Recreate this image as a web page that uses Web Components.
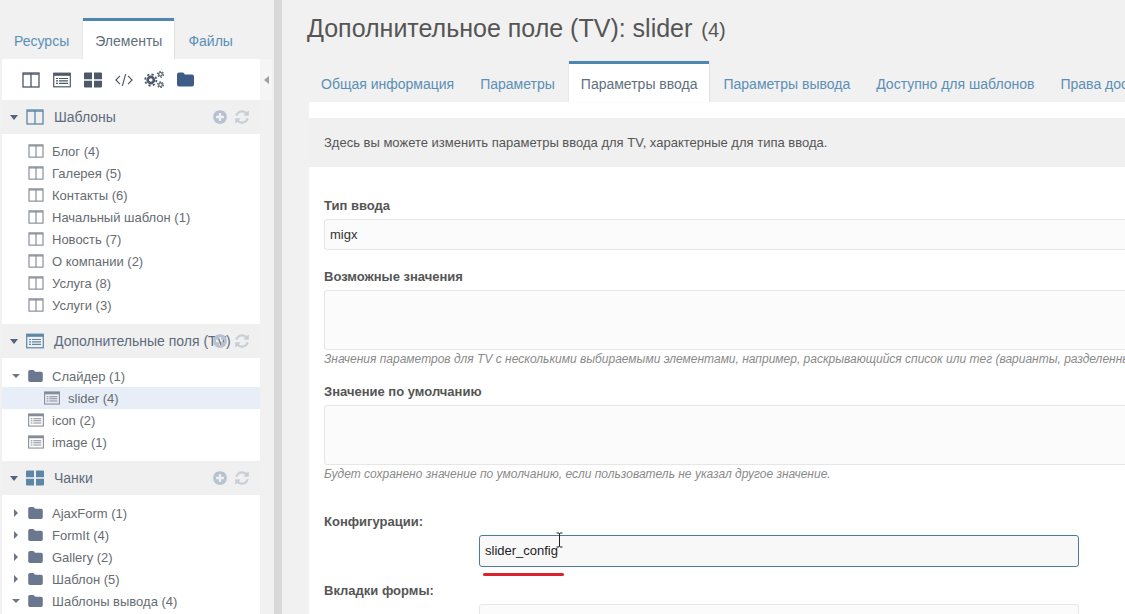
<!DOCTYPE html>
<html lang="ru">
<head>
<meta charset="utf-8">
<title>slider</title>
<style>
    html, body { margin: 0; height: 100%; overflow: hidden; background: #f1f1f1; }
    body { font-family: "Liberation Sans", Arial, sans-serif; }
</style>
</head>
<body>
<mx-app>
    <mx-sidebar slot="side">
        <mx-tree-section icon="template" title="Шаблоны">
            <mx-tree-row icon="template">Блог (4)</mx-tree-row>
            <mx-tree-row icon="template">Галерея (5)</mx-tree-row>
            <mx-tree-row icon="template">Контакты (6)</mx-tree-row>
            <mx-tree-row icon="template">Начальный шаблон (1)</mx-tree-row>
            <mx-tree-row icon="template">Новость (7)</mx-tree-row>
            <mx-tree-row icon="template">О компании (2)</mx-tree-row>
            <mx-tree-row icon="template">Услуга (8)</mx-tree-row>
            <mx-tree-row icon="template">Услуги (3)</mx-tree-row>
        </mx-tree-section>
        <mx-tree-section icon="tv" title="Дополнительные поля (TV)" style="--list-top: 7px">
            <mx-tree-row icon="folder" arrow="down">Слайдер (1)</mx-tree-row>
            <mx-tree-row icon="tv" level="1" selected>slider (4)</mx-tree-row>
            <mx-tree-row icon="tv">icon (2)</mx-tree-row>
            <mx-tree-row icon="tv">image (1)</mx-tree-row>
        </mx-tree-section>
        <mx-tree-section icon="chunk" title="Чанки" style="--list-top: 7px">
            <mx-tree-row icon="folder" arrow="right">AjaxForm (1)</mx-tree-row>
            <mx-tree-row icon="folder" arrow="right">FormIt (4)</mx-tree-row>
            <mx-tree-row icon="folder" arrow="right">Gallery (2)</mx-tree-row>
            <mx-tree-row icon="folder" arrow="right">Шаблон (5)</mx-tree-row>
            <mx-tree-row icon="folder" arrow="down">Шаблоны вывода (4)</mx-tree-row>
        </mx-tree-section>
    </mx-sidebar>
    <mx-main slot="main"></mx-main>
</mx-app>

<script>
'use strict';

const ICONS = {
    template: '<svg viewBox="0 0 18 16"><rect x="1" y="1" width="16" height="14" fill="none" stroke="currentColor" stroke-width="1.3"/><path d="M9 1v14M1 2.200h16" fill="none" stroke="currentColor" stroke-width="1.3"/></svg>',
    tv: '<svg viewBox="0 0 18 15"><rect x=".7" y=".7" width="16.6" height="13.6" fill="none" stroke="currentColor" stroke-width="1.2"/><rect x=".7" y=".7" width="16.6" height="2.6" fill="currentColor"/><path d="M3 6h2M6 6h9M3 8.400h2M6 8.400h9M3 10.800h2M6 10.800h9" fill="none" stroke="currentColor" stroke-width="1.2"/></svg>',
    chunk: '<svg viewBox="0 0 18 15"><path d="M0 1a1 1 0 0 1 1-1h7v6.800H0zM10 0h7a1 1 0 0 1 1 1v5.800h-8zM0 8.200h8V15H1a1 1 0 0 1-1-1zM10 8.200h8V14a1 1 0 0 1-1 1h-7z" fill="currentColor"/></svg>',
    code: '<svg viewBox="0 0 20 16"><path d="M5.500 3.500 1 8l4.500 4.500M14.500 3.500 19 8l-4.500 4.500M11.800 1.500 8.200 14.500" fill="none" stroke="currentColor" stroke-width="1.3"/></svg>',
    gears: '<svg viewBox="0 0 21 17"><g fill="none" stroke="currentColor"><circle cx="6.800" cy="9" r="3.100" stroke-width="2.600"/><circle cx="6.800" cy="9" r="5.600" stroke-width="1.800" stroke-dasharray="2.200 2.200"/><circle cx="16.500" cy="3.300" r="1.800" stroke-width="1.200"/><circle cx="16.500" cy="3.300" r="3" stroke-width="1.100" stroke-dasharray="1.600 1.540"/><circle cx="16.500" cy="13.700" r="1.800" stroke-width="1.200"/><circle cx="16.500" cy="13.700" r="3" stroke-width="1.100" stroke-dasharray="1.600 1.540"/></g></svg>',
    folder: '<svg viewBox="0 0 17 14"><path d="M0 2a2 2 0 0 1 2-2h3.500a2 2 0 0 1 1.700 1l.6 1H15a2 2 0 0 1 2 2v8a2 2 0 0 1-2 2H2a2 2 0 0 1-2-2z" fill="currentColor"/></svg>',
    plus: '<svg viewBox="0 0 1792 1792"><path fill="currentColor" d="M1344 960v-128q0-26-19-45t-45-19h-256v-256q0-26-19-45t-45-19h-128q-26 0-45 19t-19 45v256h-256q-26 0-45 19t-19 45v128q0 26 19 45t45 19h256v256q0 26 19 45t45 19h128q26 0 45-19t19-45v-256h256q26 0 45-19t19-45zm320-64q0 209-103 385.500t-279.500 279.500-385.500 103-385.500-103-279.500-279.500-103-385.500 103-385.500 279.500-279.500 385.500-103 385.500 103 279.500 279.500 103 385.500z"/></svg>',
    refresh: '<svg viewBox="0 0 1792 1792"><path fill="currentColor" d="M1639 1056q0 5-1 7-64 268-268 434.500t-478 166.500q-146 0-282.500-55t-243.500-157l-129 129q-19 19-45 19t-45-19-19-45v-448q0-26 19-45t45-19h448q26 0 45 19t19 45-19 45l-137 137q71 66 161 102t187 36q134 0 250-65t186-179q11-17 53-117 8-23 30-23h192q13 0 22.500 9.500t9.500 22.500zm25-800v448q0 26-19 45t-45 19h-448q-26 0-45-19t-19-45 19-45l138-138q-148-137-349-137-134 0-250 65t-186 179q-11 17-53 117-8 23-30 23h-199q-13 0-22.500-9.500t-9.500-22.500v-7q65-268 270-434.500t480-166.500q146 0 284 55.500t245 156.500l130-129q19-19 45-19t45 19 19 45z"/></svg>'
};

class MxIcon extends HTMLElement {
    constructor() {
        super();
        let shadowRoot = this.attachShadow({mode: 'open'});
        shadowRoot.innerHTML = `
            <style>
                :host{
                    display: inline-flex;
                    flex: none;
                    width: var(--icon-w, 16px);
                    height: var(--icon-h, 14px);
                }
                svg{ display: block; width: 100%; height: 100%; }
            </style>
            ${ICONS[this.getAttribute('name')] || ''}
        `;
    }
}
customElements.define('mx-icon', MxIcon);

class MxTabs extends HTMLElement {
    constructor() {
        super();
        let shadowRoot = this.attachShadow({mode: 'open'});
        shadowRoot.innerHTML = `
            <style>
                :host{
                    display: flex;
                    align-items: flex-end;
                    white-space: nowrap;
                }
                span{
                    display: block;
                    box-sizing: border-box;
                    padding: 0 13px;
                    height: 38px;
                    line-height: 40px;
                    font-size: 14px;
                    color: #5b8fb5;
                }
                span.active{
                    height: 41px;
                    margin: 0 1px;
                    padding: 0 12px;
                    background: #fff;
                    border-top: 3px solid #4d87ad;
                    color: #5f6f7c;
                    box-shadow: 1px 0 1px rgba(0,0,0,.06), -1px 0 1px rgba(0,0,0,.03);
                }
            </style>
        `;
        let active = this.getAttribute('active');
        this.getAttribute('items').split('|').forEach(function(label){
            let tab = document.createElement('span');
            tab.textContent = label;
            if(label === active){
                tab.className = 'active';
            }
            shadowRoot.appendChild(tab);
        });
    }
}
customElements.define('mx-tabs', MxTabs);

class MxTreeRow extends HTMLElement {
    constructor() {
        super();
        let level = Number(this.getAttribute('level') || 0);
        let arrow = this.getAttribute('arrow');
        let shadowRoot = this.attachShadow({mode: 'open'});
        shadowRoot.innerHTML = `
            <style>
                :host{
                    display: flex;
                    align-items: center;
                    height: 22px;
                    padding-left: ${10 + level * 16}px;
                    font-size: 13px;
                    color: #666c72;
                    white-space: nowrap;
                }
                :host([selected]){ background: #e7eef7; }
                .arrow{
                    width: 16px;
                    flex: none;
                    display: flex;
                }
                .arrow.down::before{
                    content: '';
                    border: 4px solid transparent;
                    border-top: 4px solid #6d7683;
                    border-bottom: 0;
                }
                .arrow.right::before{
                    content: '';
                    margin-left: 2px;
                    border: 4px solid transparent;
                    border-left: 4px solid #6d7683;
                    border-right: 0;
                }
                mx-icon{
                    --icon-w: 16px;
                    --icon-h: 14px;
                    margin-right: 8px;
                    color: #858c96;
                }
                mx-icon[name=folder]{
                    --icon-w: 15px;
                    --icon-h: 12px;
                    margin-right: 9px;
                    color: #69788f;
                }
            </style>
            <span class="arrow ${arrow || ''}"></span>
            <mx-icon name="${this.getAttribute('icon')}"></mx-icon>
            <slot></slot>
        `;
    }
}
customElements.define('mx-tree-row', MxTreeRow);

class MxTreeSection extends HTMLElement {
    constructor() {
        super();
        let shadowRoot = this.attachShadow({mode: 'open'});
        shadowRoot.innerHTML = `
            <style>
                :host{ display: block; }
                header{
                    display: flex;
                    align-items: center;
                    height: 34px;
                    background: #f0f0f0;
                    padding: 0 17px 0 8px;
                    position: relative;
                    font-size: 14px;
                    color: #5d6b7c;
                    white-space: nowrap;
                }
                .caret{
                    border: 4px solid transparent;
                    border-top: 5px solid #51647c;
                    border-bottom: 0;
                    margin-right: 8px;
                }
                .main{
                    --icon-w: 18px;
                    --icon-h: 16px;
                    margin-right: 10px;
                    color: #5e87a6;
                }
                .title{ flex: 1; padding-bottom: 1px; }
                .tool{
                    --icon-w: 16px;
                    --icon-h: 16px;
                    color: #b6c2cf;
                    margin-left: 6px;
                }
                .tool.refresh{ color: #c7cfd6; }
                /* the tools stay over the title when it is too long */
                .tools{
                    position: absolute;
                    right: 10px;
                    top: 9px;
                    display: flex;
                }
                .list{ padding: var(--list-top, 6px) 0 8px; }
            </style>
            <header>
                <span class="caret"></span>
                <mx-icon class="main" name="${this.getAttribute('icon')}"></mx-icon>
                <span class="title">${this.getAttribute('title')}</span>
                <span class="tools">
                    <mx-icon class="tool" name="plus"></mx-icon>
                    <mx-icon class="tool refresh" name="refresh"></mx-icon>
                </span>
            </header>
            <div class="list"><slot></slot></div>
        `;
    }
}
customElements.define('mx-tree-section', MxTreeSection);

class MxSidebar extends HTMLElement {
    constructor() {
        super();
        let shadowRoot = this.attachShadow({mode: 'open'});
        shadowRoot.innerHTML = `
            <style>
                :host{
                    display: block;
                    flex: none;
                    width: 274px;
                    height: 100%;
                    padding-top: 18px;
                    box-sizing: border-box;
                    position: relative;
                }
                mx-tabs{ margin-left: 1px; }
                .body{
                    display: flex;
                    margin-left: 2px;
                }
                .tree{
                    width: 258px;
                    background: #fff;
                    flex: none;
                }
                .toolbar{
                    height: 41px;
                    display: flex;
                    align-items: center;
                    gap: 13px;
                    padding-left: 20px;
                    color: #4d5868;
                }
                .toolbar mx-icon{ --icon-w: 18px; --icon-h: 16px; }
                .toolbar .gears{ --icon-w: 21px; --icon-h: 17px; margin: 0 -1px 0 -2px; }
                .toolbar .folder{ color: #3f5c86; --icon-w: 17px; --icon-h: 15px; }
                .collapse{
                    width: 12px;
                    height: 41px;
                    background: #f5f5f5;
                    display: flex;
                    align-items: center;
                    justify-content: center;
                }
                .collapse::before{
                    content: '';
                    border: 4px solid transparent;
                    border-right: 5px solid #9aa0a6;
                    border-left: 0;
                }
            </style>
            <mx-tabs items="Ресурсы|Элементы|Файлы" active="Элементы"></mx-tabs>
            <div class="body">
                <div class="tree">
                    <div class="toolbar">
                        <mx-icon name="template"></mx-icon>
                        <mx-icon name="tv"></mx-icon>
                        <mx-icon name="chunk"></mx-icon>
                        <mx-icon name="code"></mx-icon>
                        <mx-icon class="gears" name="gears"></mx-icon>
                        <mx-icon class="folder" name="folder"></mx-icon>
                    </div>
                    <slot></slot>
                </div>
                <div class="collapse"></div>
            </div>
        `;
    }
}
customElements.define('mx-sidebar', MxSidebar);

class MxField extends HTMLElement {
    constructor() {
        super();
        let shadowRoot = this.attachShadow({mode: 'open'});
        shadowRoot.innerHTML = `
            <style>
                :host{
                    display: block;
                    font-size: 13px;
                    color: #555;
                }
                label{
                    display: block;
                    font-weight: bold;
                    line-height: 15px;
                    margin-bottom: 6px;
                }
                .help{
                    font-style: italic;
                    font-size: 12px;
                    line-height: 14px;
                    margin-top: 2px;
                    color: #8a8a8a;
                    white-space: nowrap;
                }
                .help:empty{ display: none; }
            </style>
            <label>${this.getAttribute('label')}</label>
            <slot></slot>
            <div class="help">${this.getAttribute('help') || ''}</div>
        `;
    }
}
customElements.define('mx-field', MxField);

class MxInput extends HTMLElement {
    constructor() {
        super();
        let shadowRoot = this.attachShadow({mode: 'open'});
        shadowRoot.innerHTML = `
            <style>
                :host{
                    display: block;
                    box-sizing: border-box;
                    height: 31px;
                    line-height: 29px;
                    padding: 0 5px;
                    background: #fbfbfb;
                    border: 1px solid #e6e6e6;
                    border-radius: 3px;
                    font-size: 13px;
                    color: #333;
                }
                :host([area]){ height: 60px; }
                :host([focused]){
                    height: 32px;
                    line-height: 30px;
                    background: #f8f8f8;
                    border-color: #4d7d96;
                    color: #222;
                }
            </style>
            <slot></slot>
        `;
    }
}
customElements.define('mx-input', MxInput);

class MxMain extends HTMLElement {
    constructor() {
        super();
        let shadowRoot = this.attachShadow({mode: 'open'});
        shadowRoot.innerHTML = `
            <style>
                :host{
                    display: block;
                    flex: 1;
                    min-width: 0;
                    height: 100%;
                    overflow: hidden;
                    border-left: 8px solid #d9d9d9;
                    box-sizing: border-box;
                }
                .page{
                    width: 1200px;
                    padding-left: 25px;
                }
                h1{
                    margin: 0;
                    height: 61px;
                    box-sizing: border-box;
                    padding-top: 13px;
                    line-height: 30px;
                    font-size: 25px;
                    font-weight: normal;
                    color: #555;
                    white-space: nowrap;
                }
                h1 small{ font-size: 20px; margin-left: 2px; }
                mx-tabs{ margin-left: 1px; }
                .panel{
                    margin-left: 2px;
                    background: #fff;
                    padding-top: 16px;
                    height: 600px;
                }
                .desc{
                    height: 49px;
                    line-height: 50px;
                    padding-left: 15px;
                    background: #f0f0f0;
                    font-size: 13px;
                    color: #555;
                }
                form{
                    display: block;
                    padding: 31px 15px 0;
                }
                mx-field{ margin-bottom: 19px; }
                mx-field[help]{ margin-bottom: 18px; }
                .indented{ margin-left: 155px; width: 600px; position: relative; }
                .mark{
                    position: absolute;
                    left: 4px;
                    top: 38px;
                    width: 81px;
                    height: 3px;
                    border-radius: 2px;
                    background: #d9232e;
                }
                .cursor{
                    position: absolute;
                    left: 77px;
                    top: -3px;
                    width: 7px;
                    height: 16px;
                }
                .config{ margin-top: 33px; margin-bottom: 16px; }
            </style>
            <div class="page">
                <h1>Дополнительное поле (TV): slider <small>(4)</small></h1>
                <mx-tabs items="Общая информация|Параметры|Параметры ввода|Параметры вывода|Доступно для шаблонов|Права доступа" active="Параметры ввода"></mx-tabs>
                <div class="panel">
                    <div class="desc">Здесь вы можете изменить параметры ввода для TV, характерные для типа ввода.</div>
                    <form>
                        <mx-field label="Тип ввода"><mx-input>migx</mx-input></mx-field>
                        <mx-field label="Возможные значения" help="Значения параметров для TV с несколькими выбираемыми элементами, например, раскрывающийся список или тег (варианты, разделенные"><mx-input area></mx-input></mx-field>
                        <mx-field label="Значение по умолчанию" help="Будет сохранено значение по умолчанию, если пользователь не указал другое значение."><mx-input area></mx-input></mx-field>
                        <mx-field class="config" label="Конфигурации:">
                            <div class="indented">
                                <mx-input focused>slider_config</mx-input>
                                <div class="mark"></div>
                                <svg class="cursor" viewBox="0 0 7 16"><path d="M.5 1H3l.5.8.5-.8h2.500M3.500 2v12M.5 15H3l.5-.8.5.8h2.500" fill="none" stroke="#222" stroke-width="1"/></svg>
                            </div>
                        </mx-field>
                        <mx-field label="Вкладки формы:">
                            <div class="indented"><mx-input></mx-input></div>
                        </mx-field>
                    </form>
                </div>
            </div>
        `;
    }
}
customElements.define('mx-main', MxMain);

class MxApp extends HTMLElement {
    constructor() {
        super();
        let shadowRoot = this.attachShadow({mode: 'open'});
        shadowRoot.innerHTML = `
            <style>
                :host{
                    display: flex;
                    height: 100%;
                    overflow: hidden;
                    font-family: "Liberation Sans", Arial, sans-serif;
                }
            </style>
            <slot name="side"></slot>
            <slot name="main"></slot>
        `;
    }
}
customElements.define('mx-app', MxApp);
</script>
</body>
</html>
